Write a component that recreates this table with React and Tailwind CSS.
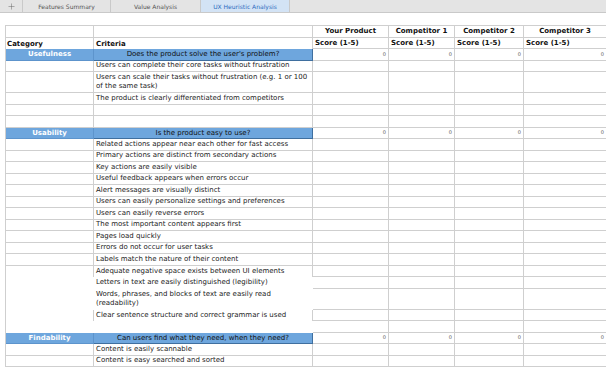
import { Plus } from "lucide-react";

const tabs = [
  { name: "Features Summary", w: "w-[88px]" },
  { name: "Value Analysis", w: "w-[90px]" },
  { name: "UX Heuristic Analysis", w: "w-[90px]", active: true },
];

const competitors = ["Your Product", "Competitor 1", "Competitor 2", "Competitor 3"];

// gap: rows where the sheet drops its grid lines in the first two columns
const rows = [
  { section: "Usefulness", q: "Does the product solve the user's problem?" },
  { text: "Users can complete their core tasks without frustration" },
  { text: "Users can scale their tasks without frustration (e.g. 1 or 100 of the same task)", tall: true },
  { text: "The product is clearly differentiated from competitors" },
  { text: "" },
  { text: "" },
  { section: "Usability", q: "Is the product easy to use?" },
  { text: "Related actions appear near each other for fast access" },
  { text: "Primary actions are distinct from secondary actions" },
  { text: "Key actions are easily visible" },
  { text: "Useful feedback appears when errors occur" },
  { text: "Alert messages are visually distinct" },
  { text: "Users can easily personalize settings and preferences" },
  { text: "Users can easily reverse errors" },
  { text: "The most important content appears first" },
  { text: "Pages load quickly" },
  { text: "Errors do not occur for user tasks" },
  { text: "Labels match the nature of their content" },
  { text: "Adequate negative space exists between UI elements", gap: true, boxed: true },
  { text: "Letters in text are easily distinguished (legibility)", gap: true },
  { text: "Words, phrases, and blocks of text are easily read (readability)", tall: true, gap: true },
  { text: "Clear sentence structure and correct grammar is used", gap: true, boxed: true },
  { text: "", gap: true },
  { section: "Findability", q: "Can users find what they need, when they need?" },
  { text: "Content is easily scannable" },
  { text: "Content is easy searched and sorted" },
];

const line = "border-[#cfcfcf]";
const grid = "grid grid-cols-[88px_219px_76px_66px_69px_83px]";

function ScoreCells({ value }) {
  return competitors.map((c) => (
    <div
      key={c}
      className={`border-r border-b ${line} flex items-center justify-end pr-[2px] text-[5px] text-[#555]`}
    >
      {value}
    </div>
  ));
}

function Row({ row }) {
  const h = row.tall ? "h-[21px]" : "h-[11.5px]";
  if (row.section) {
    return (
      <div className={`${grid} ${h}`}>
        <div className="bg-[#6ea6dd] border-r border-b border-[#5d94cc] flex items-center justify-center text-white font-bold">
          {row.section}
        </div>
        <div className="bg-[#6ea6dd] border-r border-b border-[#3f6f9f] flex items-center justify-center text-[#111]">
          {row.q}
        </div>
        <ScoreCells value="0" />
      </div>
    );
  }
  return (
    <div className={`${grid} ${h}`}>
      <div
        className={`${row.gap ? (row.boxed ? "border-r" : "") : "border-r border-b"} ${line}`}
      />
      <div
        className={`${row.gap ? (row.boxed ? "border-r" : "") : "border-r border-b"} ${line} flex items-center pl-[2px] pr-[4px] leading-[9.5px] text-[#222]`}
      >
        {row.text}
      </div>
      <ScoreCells value="" />
    </div>
  );
}

export default function App() {
  return (
    <div className="w-[606px] h-[367px] overflow-hidden bg-white font-['DejaVu_Sans',Verdana,sans-serif] text-[7px]">
      <div className="flex h-[13px] bg-[#e4e4e4] border-b border-[#c9c9c9] text-[6px] text-[#555]">
        <div className="w-[22px] flex items-center justify-center text-[#666]">
          <Plus size={9} strokeWidth={1.3} />
        </div>
        {tabs.map((t) => (
          <div
            key={t.name}
            className={`${t.w} border-l border-[#c9c9c9] flex items-center justify-center ${
              t.active ? "bg-[#d3e3f5] text-[#2d6cc0] border-r" : ""
            }`}
          >
            {t.name}
          </div>
        ))}
      </div>

      <div className={`mt-[12px] ml-[5px] border-l border-t ${line}`}>
        <div className={`${grid} h-[11.5px]`}>
          <div className={`border-r border-b ${line}`} />
          <div className={`border-r border-b ${line}`} />
          {competitors.map((c) => (
            <div
              key={c}
              className={`border-r border-b ${line} flex items-center justify-center font-bold text-[#111]`}
            >
              {c}
            </div>
          ))}
        </div>
        <div className={`${grid} h-[11.5px] font-bold text-[#111]`}>
          <div className={`border-r ${line} flex items-end pl-[1px]`}>Category</div>
          <div className={`border-r ${line} flex items-end pl-[2px]`}>Criteria</div>
          {competitors.map((c) => (
            <div key={c} className={`border-r border-b ${line} flex items-end pl-[2px]`}>
              Score (1-5)
            </div>
          ))}
        </div>
        {rows.map((r, i) => (
          <Row key={i} row={r} />
        ))}
      </div>
    </div>
  );
}
